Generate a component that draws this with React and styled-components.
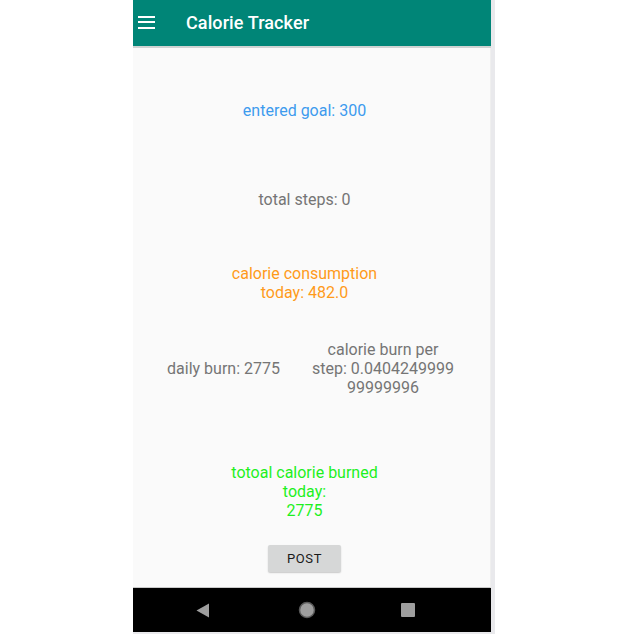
import React from "react";
import styled, { createGlobalStyle } from "styled-components";

const GlobalStyle = createGlobalStyle`
  html, body {
    margin: 0;
    padding: 0;
    background: #ffffff;
  }
  body {
    font-family: Roboto, "Noto Sans", sans-serif;
  }
`;

const Page = styled.div`
  width: 628px;
  height: 634px;
  display: flex;
  justify-content: flex-start;
  padding-left: 133px;
  box-sizing: border-box;
`;

const Device = styled.div`
  width: 362px;
  height: 634px;
  display: flex;
  flex-direction: column;
  background: #e9e9ec;
  padding: 0 4px 2px 0;
  box-sizing: border-box;
`;

const Toolbar = styled.header`
  height: 46px;
  flex-shrink: 0;
  background: #008577;
  display: flex;
  align-items: center;
  border-bottom: 2px solid #cfd3d2;
`;

const MenuButton = styled.div`
  width: 17px;
  margin-left: 5px;
  display: flex;
  flex-direction: column;
  gap: 3.5px;
  margin-top: -2px;

  span {
    display: block;
    height: 2px;
    background: #ffffff;
  }
`;

const Title = styled.h1`
  margin: -2px 0 0 31px;
  font-size: 18px;
  font-weight: 500;
  color: #ffffff;
  letter-spacing: 0.1px;
`;

const Content = styled.main`
  flex: 1;
  background: #fafafa;
  border-right: 1px solid #efefef;
  border-bottom: 1px solid #c9c9c9;
  display: flex;
  flex-direction: column;
  align-items: center;
  padding-right: 14px;
`;

const Stat = styled.p`
  margin: ${(p) => p.$gap}px 0 0;
  font-size: 16px;
  line-height: 19px;
  text-align: center;
  color: ${(p) => p.$color || "#757575"};
`;

const Row = styled.div`
  margin-top: 38px;
  display: flex;
  align-items: center;
  gap: 32px;
  padding-left: 12px;
`;

const Cell = styled.p`
  margin: 0;
  font-size: 16px;
  line-height: 19px;
  text-align: center;
  color: #757575;
`;

const PostButton = styled.button`
  margin-top: 25px;
  width: 73px;
  height: 27px;
  border: none;
  border-radius: 2px;
  background: #d6d7d7;
  box-shadow: 0 1px 1.5px rgba(0, 0, 0, 0.2);
  font-family: Roboto, sans-serif;
  font-size: 13px;
  font-weight: 400;
  color: #1a1a1a;
  letter-spacing: 0.6px;
  padding: 0;
`;

const NavBar = styled.nav`
  height: 44px;
  flex-shrink: 0;
  background: #000000;
  display: flex;
  align-items: center;
  padding-left: 63px;
`;

const NavSlot = styled.div`
  width: ${(p) => p.$w}px;
  display: flex;
  align-items: center;
`;

export default function App() {
  return (
    <>
      <GlobalStyle />
      <Page>
        <Device>
          <Toolbar>
            <MenuButton>
              <span />
              <span />
              <span />
            </MenuButton>
            <Title>Calorie Tracker</Title>
          </Toolbar>
          <Content>
            <Stat $gap={53} $color="#3d9bee">entered goal: 300</Stat>
            <Stat $gap={70}>total steps: 0</Stat>
            <Stat $gap={55} $color="#ff9a1a">
              calorie consumption
              <br />
              today: 482.0
            </Stat>
            <Row>
              <Cell>daily burn: 2775</Cell>
              <Cell>
                calorie burn per
                <br />
                step: 0.0404249999
                <br />
                99999996
              </Cell>
            </Row>
            <Stat $gap={66} $color="#1ef01e">
              totoal calorie burned
              <br />
              today:
              <br />
              2775
            </Stat>
            <PostButton>POST</PostButton>
          </Content>
          <NavBar>
            <NavSlot $w={102}>
              <svg width="14" height="15" viewBox="0 0 14 15">
                <path d="M13 0.5 L13 14.5 L0.5 7.5 Z" fill="#9e9e9e" />
              </svg>
            </NavSlot>
            <NavSlot $w={103}>
              <svg width="18" height="18" viewBox="0 0 18 18">
                <circle cx="9" cy="9" r="7.5" fill="#9e9e9e" stroke="#5a5a5a" strokeWidth="1.5" />
              </svg>
            </NavSlot>
            <NavSlot $w={20}>
              <svg width="14" height="14" viewBox="0 0 14 14">
                <rect x="0" y="0" width="14" height="14" rx="1" fill="#9e9e9e" />
              </svg>
            </NavSlot>
          </NavBar>
        </Device>
      </Page>
    </>
  );
}
